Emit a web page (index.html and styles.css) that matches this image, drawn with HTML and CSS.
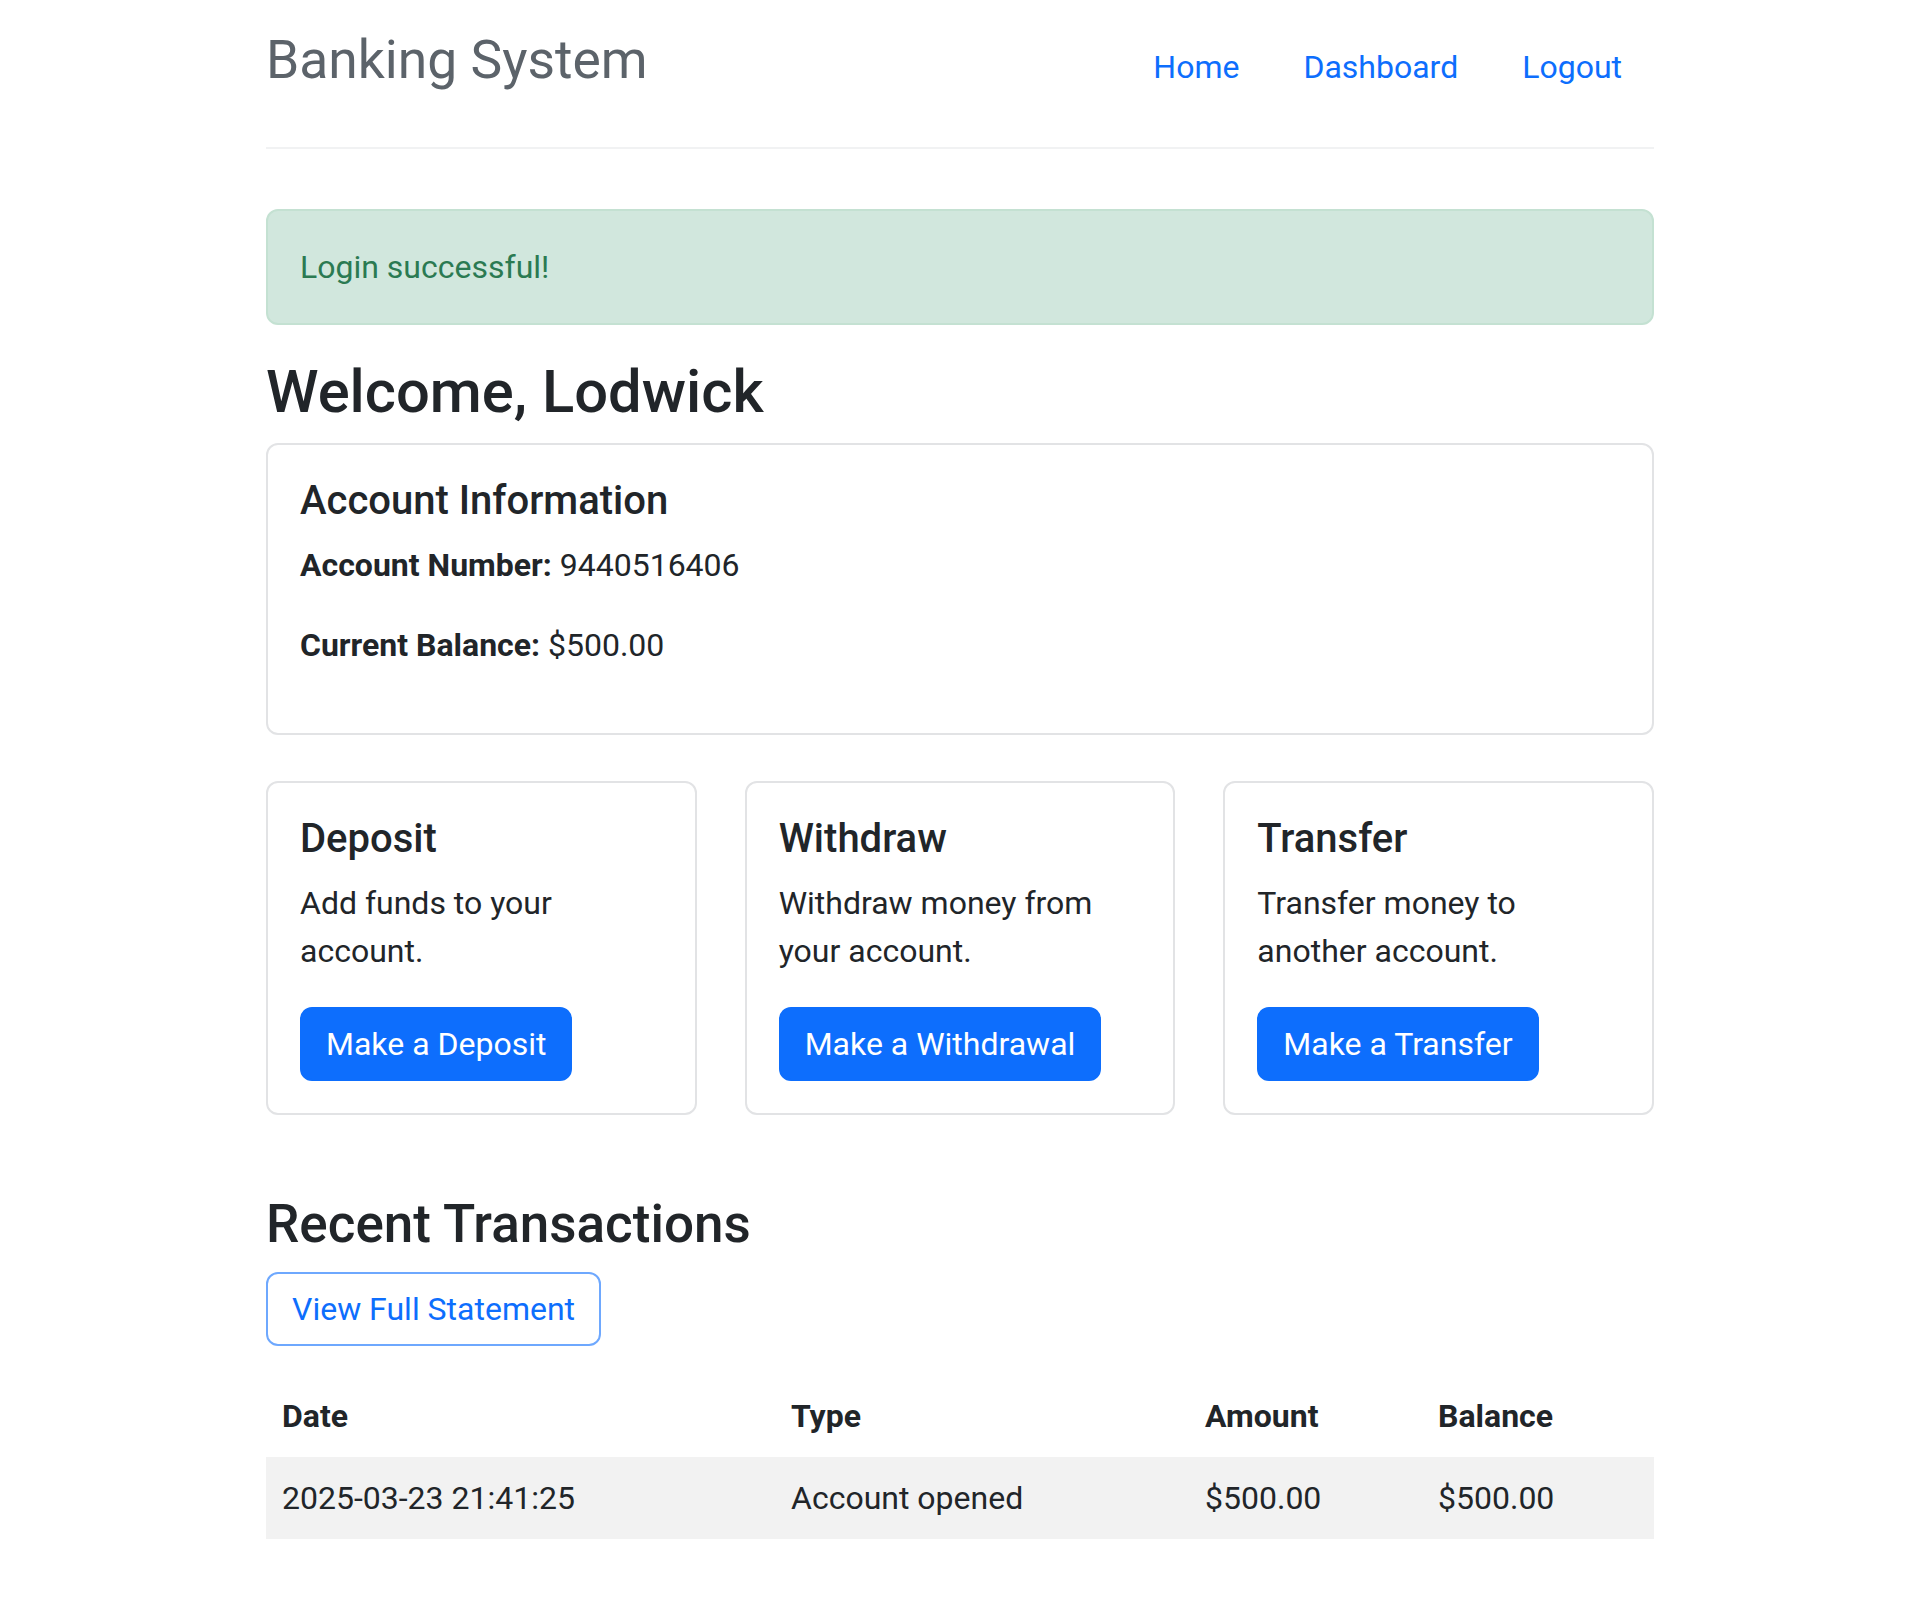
FILE: index.html
```html
<html>
    <head>
        <title>Banking System</title>

        <link rel="stylesheet" href="styles.css">
    </head>

    <body>
        <div class="page">
            <header class="topbar">
                <span class="brand">Banking System</span>
                <nav class="nav">
                    <a href="#">Home</a>
                    <a href="#">Dashboard</a>
                    <a href="#">Logout</a>
                </nav>
            </header>

            <div class="alert">Login successful!</div>

            <h2 class="welcome">Welcome, Lodwick</h2>

            <div class="card info">
                <h5 class="cardTitle">Account Information</h5>
                <p><strong>Account Number:</strong> 9440516406</p>
                <p><strong>Current Balance:</strong> $500.00</p>
            </div>

            <div class="actions">
                <div class="card">
                    <h5 class="cardTitle">Deposit</h5>
                    <p>Add funds to your account.</p>
                    <a href="#" class="btn">Make a Deposit</a>
                </div>
                <div class="card">
                    <h5 class="cardTitle">Withdraw</h5>
                    <p>Withdraw money from your account.</p>
                    <a href="#" class="btn">Make a Withdrawal</a>
                </div>
                <div class="card">
                    <h5 class="cardTitle">Transfer</h5>
                    <p>Transfer money to another account.</p>
                    <a href="#" class="btn">Make a Transfer</a>
                </div>
            </div>

            <h3 class="sectionTitle">Recent Transactions</h3>
            <div class="toolbar">
                <a href="#" class="btn btnOutline">View Full Statement</a>
            </div>

            <table class="transactions">
                <colgroup>
                    <col class="colDate">
                    <col class="colType">
                    <col class="colAmount">
                    <col>
                </colgroup>
                <thead>
                    <tr>
                        <th>Date</th>
                        <th>Type</th>
                        <th>Amount</th>
                        <th>Balance</th>
                    </tr>
                </thead>
                <tbody>
                    <tr>
                        <td>2025-03-23 21:41:25</td>
                        <td>Account opened</td>
                        <td>$500.00</td>
                        <td>$500.00</td>
                    </tr>
                </tbody>
            </table>
        </div>
    </body>
</html>
```

FILE: styles.css
```css
body {
    margin: 0;
    background-color: white;
    font-family: Roboto, "Liberation Sans", sans-serif;
    font-size: 32px;
    line-height: 48px;
    color: #212529;
}
.page {
    width: 1388px;
    margin: 0 auto;
}
.topbar {
    display: flex;
    justify-content: space-between;
    align-items: baseline;
    padding: 20px 0 40px;
    border-bottom: 2px solid #f1f2f3;
}
.brand {
    font-size: 53.4px;
    line-height: 80px;
    color: #5c636a;
}
.nav {
    display: flex;
}
.nav a {
    padding: 16px 32px;
    color: #0d6efd;
    text-decoration: none;
}
.alert {
    margin: 60px 0 32px;
    padding: 32px;
    border: 2px solid #c4e1d2;
    border-radius: 12px;
    background-color: #d1e7dd;
    color: #2b7a52;
}
.welcome {
    margin: 0 0 14px;
    font-size: 59.7px;
    font-weight: 500;
    line-height: 1.2;
}
.card {
    display: flex;
    flex-direction: column;
    align-items: flex-start;
    padding: 32px;
    border: 2px solid #e2e3e5;
    border-radius: 12px;
}
.card p {
    margin: 0 0 32px;
}
.cardTitle {
    margin: 0 0 16px;
    font-size: 40px;
    font-weight: 500;
    line-height: 1.2;
}
.info {
    margin-bottom: 46px;
}
.actions {
    display: grid;
    grid-template-columns: repeat(3, 1fr);
    gap: 48px;
    margin-bottom: 78px;
}
.btn {
    display: inline-block;
    padding: 11px 24px;
    border: 2px solid #0d6efd;
    border-radius: 12px;
    background-color: #0d6efd;
    color: white;
    text-decoration: none;
}
.btnOutline {
    background-color: white;
    border-color: #6ea8fe;
    color: #0d6efd;
}
.sectionTitle {
    margin: 0 0 16px;
    font-size: 53px;
    font-weight: 500;
    line-height: 1.2;
}
.toolbar {
    display: flex;
    margin-bottom: 29px;
}
.transactions {
    width: 100%;
    border-collapse: collapse;
    table-layout: fixed;
    font-size: 32px;
    line-height: 48px;
    color: #212529;
}
.colDate {
    width: 509px;
}
.colType {
    width: 414px;
}
.colAmount {
    width: 233px;
}
.transactions th, .transactions td {
    padding: 17px 16px;
    text-align: left;
}
.transactions th {
    font-weight: 700;
}
.transactions tbody tr:nth-child(odd) {
    background-color: #f2f2f2;
}
```
